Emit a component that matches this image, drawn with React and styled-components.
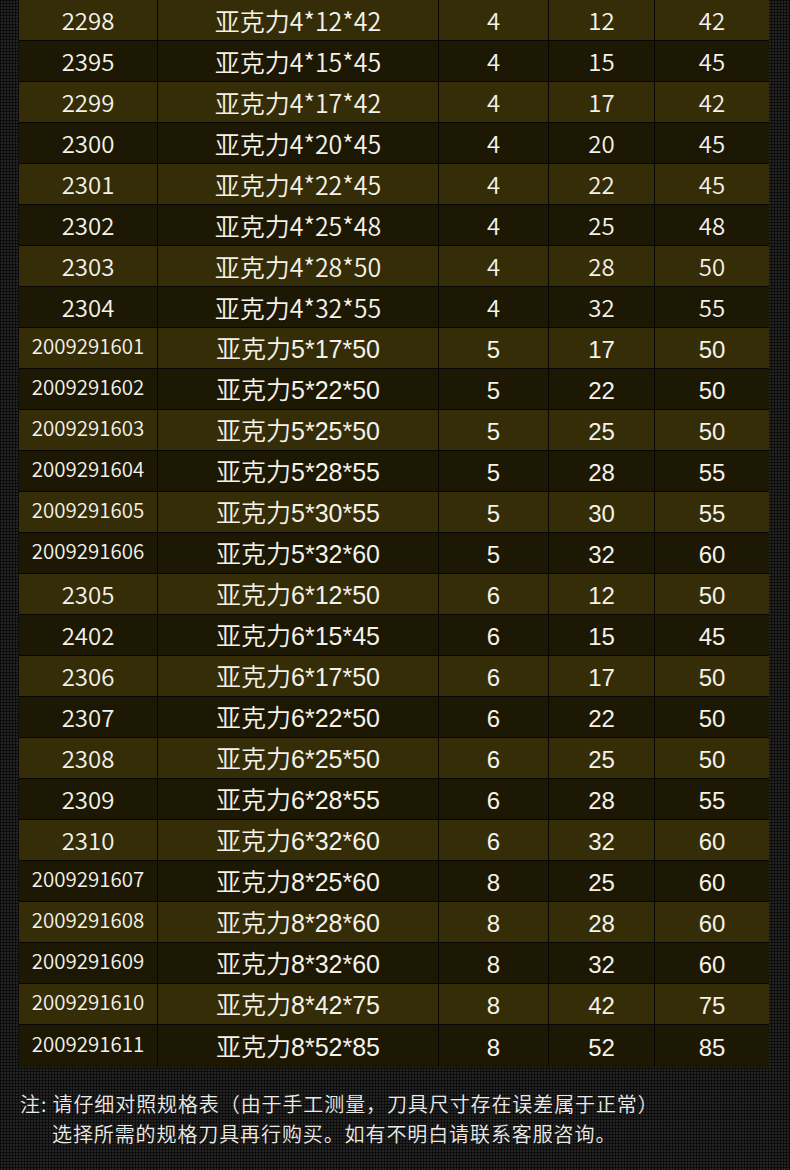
import React from "react";
import styled, { createGlobalStyle } from "styled-components";

const Global = createGlobalStyle`
  html, body {
    margin: 0;
    padding: 0;
    width: 790px;
    height: 1170px;
    overflow: hidden;
    background-color: #0d0d0d;
    background-image:
      linear-gradient(#0d0d0d 1px, transparent 1px),
      linear-gradient(90deg, #0d0d0d 1px, #242424 1px);
    background-size: 3px 3px;
    font-family: "Noto Sans CJK SC", "Noto Sans", sans-serif;
  }
`;

const Page = styled.div`
  display: flex;
  flex-direction: column;
  padding: 0 21px 0 19px;
`;

const Table = styled.div`
  display: flex;
  flex-direction: column;
  width: 750px;
`;

const Row = styled.div`
  display: grid;
  grid-template-columns: 139px 281px 110px 106px 114px;
  height: 41px;
  box-sizing: border-box;
  border-bottom: 1px solid #070603;
  background: ${(p) => (p.$odd ? "#1c1804" : "#352d07")};
  color: #f4f2ea;
  &:last-child {
    border-bottom: none;
    height: 42px;
  }
`;

const Cell = styled.div`
  display: flex;
  align-items: center;
  justify-content: center;
  box-sizing: border-box;
  border-right: 1px solid #070603;
  font-size: ${(p) => (p.$wide ? "25px" : "24px")};
  font-weight: 350;
  line-height: 1;
  font-family: ${(p) =>
    p.$latin
      ? '"Liberation Sans", "Noto Sans CJK SC", sans-serif'
      : '"Noto Sans CJK SC", "Noto Sans", sans-serif'};
  padding-top: ${(p) => (p.$latin ? "3px" : "0")};
  &:last-child {
    border-right: none;
  }
`;

const IdCell = styled(Cell)`
  font-size: ${(p) => (p.$long ? "20.5px" : "24px")};
  font-family: "Noto Sans CJK SC", "Noto Sans", sans-serif;
  padding-top: 0;
  padding-bottom: ${(p) => (p.$long ? "5px" : "0")};
`;

const Note = styled.div`
  display: flex;
  flex-direction: column;
  padding: 22px 0 0 1px;
  color: #ecebe6;
  font-size: 20px;
  font-weight: 350;
  line-height: 30px;
  letter-spacing: 0.9px;
  font-family: "Noto Sans CJK SC", "Noto Sans", sans-serif;
`;

const Indent = styled.span`
  padding-left: 32px;
`;

const rows = [
  ["2298", 4, 12, 42],
  ["2395", 4, 15, 45],
  ["2299", 4, 17, 42],
  ["2300", 4, 20, 45],
  ["2301", 4, 22, 45],
  ["2302", 4, 25, 48],
  ["2303", 4, 28, 50],
  ["2304", 4, 32, 55],
  ["2009291601", 5, 17, 50],
  ["2009291602", 5, 22, 50],
  ["2009291603", 5, 25, 50],
  ["2009291604", 5, 28, 55],
  ["2009291605", 5, 30, 55],
  ["2009291606", 5, 32, 60],
  ["2305", 6, 12, 50],
  ["2402", 6, 15, 45],
  ["2306", 6, 17, 50],
  ["2307", 6, 22, 50],
  ["2308", 6, 25, 50],
  ["2309", 6, 28, 55],
  ["2310", 6, 32, 60],
  ["2009291607", 8, 25, 60],
  ["2009291608", 8, 28, 60],
  ["2009291609", 8, 32, 60],
  ["2009291610", 8, 42, 75],
  ["2009291611", 8, 52, 85],
];

export default function App() {
  return (
    <>
      <Global />
      <Page>
        <Table>
          {rows.map(([id, a, b, c], i) => {
            const latin = i >= 8;
            const long = id.length > 4;
            return (
              <Row key={id} $odd={i % 2 === 1}>
                <IdCell $long={long}>{id}</IdCell>
                <Cell $latin={latin} $wide>{`亚克力${a}*${b}*${c}`}</Cell>
                <Cell $latin={latin}>{a}</Cell>
                <Cell $latin={latin}>{b}</Cell>
                <Cell $latin={latin}>{c}</Cell>
              </Row>
            );
          })}
        </Table>
        <Note>
          <span>注: 请仔细对照规格表（由于手工测量，刀具尺寸存在误差属于正常）</span>
          <Indent>选择所需的规格刀具再行购买。如有不明白请联系客服咨询。</Indent>
        </Note>
      </Page>
    </>
  );
}
